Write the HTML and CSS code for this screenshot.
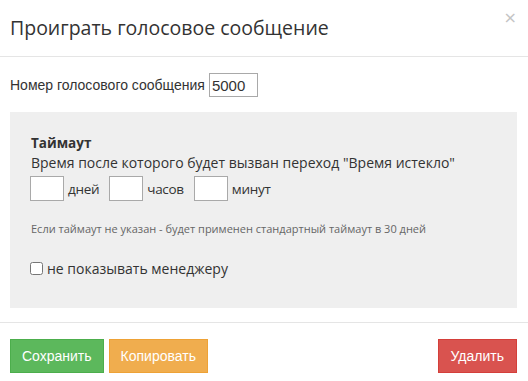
FILE: index.html
```html
<!DOCTYPE html>
<html lang="ru">
<head>
  <meta charset="UTF-8" />
  <title>Проиграть голосовое сообщение</title>
  <link rel="stylesheet" href="styles.css">
</head>
<body>

  <div class="modal">
    <!-- Header -->
    <div class="modal-header">
      <h4 class="modal-title">Проиграть голосовое сообщение</h4>
      <button class="close" type="button">&times;</button>
    </div>

    <!-- Body -->
    <div class="modal-body">
      <div class="number-row">
        <label for="voiceNumber">Номер голосового сообщения</label>
        <input type="text" id="voiceNumber" class="number-input" value="5000">
      </div>

      <div class="timeout-panel">
        <div class="timeout-title">Таймаут</div>
        <div class="timeout-desc">Время после которого будет вызван переход "Время истекло"</div>
        <div class="timeout-fields">
          <input type="text" class="small-input"> <span class="unit">дней</span>
          <input type="text" class="small-input"> <span class="unit">часов</span>
          <input type="text" class="small-input"> <span class="unit">минут</span>
        </div>
        <p class="hint">Если таймаут не указан - будет применен стандартный таймаут в 30 дней</p>
        <label class="checkbox-row">
          <input type="checkbox"> не показывать менеджеру
        </label>
      </div>
    </div>

    <!-- Footer -->
    <div class="modal-footer">
      <button class="btn btn-success">Сохранить</button>
      <button class="btn btn-warning">Копировать</button>
      <button class="btn btn-danger">Удалить</button>
    </div>
  </div>

</body>
</html>
```

FILE: styles.css
```css
body {
  margin: 0;
  padding: 0;
  background-color: #fff;
  font-family: "Liberation Sans", Arial, sans-serif;
  font-size: 14px;
  color: #333;
}

.modal {
  width: 528px;
}

/* Header */
.modal-header {
  display: flex;
  align-items: flex-start;
  justify-content: space-between;
  padding: 15px 11px 15px 10px;
  border-bottom: 1px solid #e5e5e5;
}
.modal-title {
  margin: 0;
  font-family: "Open Sans", sans-serif;
  font-weight: 400;
  font-size: 19.5px;
  line-height: 26px;
  color: #333;
}
.close {
  background: none;
  border: none;
  padding: 0;
  margin-top: -5px;
  font-family: "DejaVu Sans", sans-serif;
  font-size: 16px;
  font-weight: normal;
  line-height: 1;
  color: #c4c4c4;
  cursor: pointer;
}

/* Body */
.modal-body {
  padding: 16px 11px 14px 10px;
}
.number-row {
  display: flex;
  align-items: center;
  gap: 4px;
  margin-bottom: 15px;
}
.number-input {
  width: 43px;
  height: 20px;
  padding: 1px 2px;
  border: 1px solid #a9a9a9;
  font-family: "Liberation Sans", Arial, sans-serif;
  font-size: 15px;
  color: #333;
}

.timeout-panel {
  background-color: #efefef;
  padding: 22px 20px 30px 20px;
  font-family: "Open Sans", sans-serif;
}
.timeout-title {
  font-weight: bold;
  font-size: 13.5px;
  line-height: 19px;
  margin-left: 1px;
}
.timeout-desc {
  font-size: 14px;
  line-height: 20px;
  margin-left: 1px;
}
.timeout-fields {
  display: flex;
  align-items: center;
  margin-top: 3px;
}
.small-input {
  width: 28px;
  height: 21px;
  padding: 1px 2px;
  border: 1px solid #a9a9a9;
  background: #fff;
}
.unit {
  margin: 0 10px 0 4px;
  font-size: 13.5px;
  letter-spacing: -0.3px;
}
.hint {
  margin: 20px 0 0 1px;
  font-size: 11px;
  color: #666;
}
.checkbox-row {
  display: flex;
  align-items: center;
  gap: 4px;
  margin-top: 23px;
  font-size: 14px;
}
.checkbox-row input {
  margin: 0;
  width: 13px;
  height: 13px;
}

/* Footer */
.modal-footer {
  display: flex;
  gap: 5px;
  padding: 16px 11px 15px 10px;
  border-top: 1px solid #e5e5e5;
}
.btn {
  padding: 6px 11px;
  font-family: "Liberation Sans", Arial, sans-serif;
  font-size: 14px;
  line-height: 20px;
  color: #fff;
  border: 1px solid transparent;
  border-radius: 0;
  cursor: pointer;
}
.btn-success {
  background-color: #5cb85c;
  border-color: #4cae4c;
}
.btn-warning {
  background-color: #f0ad4e;
  border-color: #eea236;
}
.btn-danger {
  margin-left: auto;
  padding: 6px 12px;
  background-color: #d9534f;
  border-color: #d43f3a;
}
```
